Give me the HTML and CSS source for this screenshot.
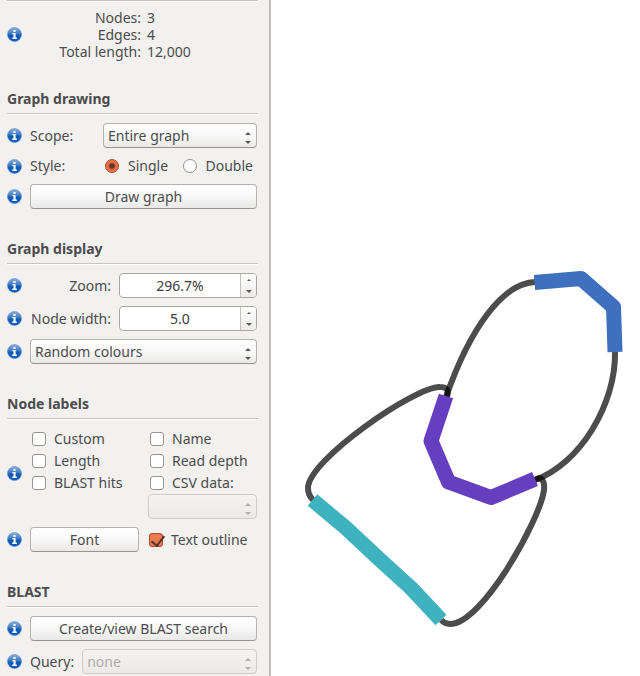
FILE: index.html
```html
<!DOCTYPE html>
<html lang="en">
<head>
<meta charset="utf-8">
<meta name="viewport" content="width=device-width, initial-scale=1">
<title>Assembly graph viewer</title>
<link rel="stylesheet" href="styles.css">
</head>
<body>
<svg class="defs" aria-hidden="true">
  <defs>
    <linearGradient id="info-fill" x1="0" y1="0" x2="0" y2="1">
      <stop offset="0" stop-color="#8fb2dc"/>
      <stop offset="0.45" stop-color="#3a79c2"/>
      <stop offset="0.55" stop-color="#0f59b0"/>
      <stop offset="1" stop-color="#0a5cc4"/>
    </linearGradient>
    <symbol id="info" viewBox="0 0 15 15">
      <circle cx="7.5" cy="7.5" r="7" fill="url(#info-fill)" stroke="#5d8cc6" stroke-width="0.6"/>
      <path d="M6.4 3h2.2v2H6.4zM5.4 6h3.2v4.6h1.2V12H5.3v-1.4h1.2V7.3H5.4z" fill="#fff"/>
    </symbol>
  </defs>
</svg>
<div class="app">
  <aside class="panel">
    <hr class="rule">
    <div class="row stats-row">
      <svg class="info"><use href="#info"/></svg>
      <dl class="stats">
        <dt>Nodes:</dt><dd>3</dd>
        <dt>Edges:</dt><dd>4</dd>
        <dt>Total length:</dt><dd>12,000</dd>
      </dl>
    </div>

    <section class="section">
      <h2 class="title">Graph drawing</h2>
      <div class="row">
        <svg class="info"><use href="#info"/></svg>
        <label class="wide-label" for="scope">Scope:</label>
        <span class="combo"><select id="scope"><option>Entire graph</option></select></span>
      </div>
      <div class="row style-row" role="radiogroup" aria-labelledby="style-label">
        <svg class="info"><use href="#info"/></svg>
        <span class="wide-label" id="style-label">Style:</span>
        <div class="radios">
          <label class="choice"><input class="radio" type="radio" name="style" checked>Single</label>
          <label class="choice"><input class="radio" type="radio" name="style">Double</label>
        </div>
      </div>
      <div class="row">
        <svg class="info"><use href="#info"/></svg>
        <button class="button" type="button">Draw graph</button>
      </div>
    </section>

    <section class="section">
      <h2 class="title">Graph display</h2>
      <div class="row">
        <svg class="info"><use href="#info"/></svg>
        <label class="spin-label" for="zoom">Zoom:</label>
        <div class="spin">
          <input id="zoom" type="text" value="296.7%">
          <div class="steps">
            <button class="step up" type="button" aria-label="Increase zoom"></button>
            <button class="step down" type="button" aria-label="Decrease zoom"></button>
          </div>
        </div>
      </div>
      <div class="row">
        <svg class="info"><use href="#info"/></svg>
        <label class="spin-label" for="width">Node width:</label>
        <div class="spin">
          <input id="width" type="text" value="5.0">
          <div class="steps">
            <button class="step up" type="button" aria-label="Increase node width"></button>
            <button class="step down" type="button" aria-label="Decrease node width"></button>
          </div>
        </div>
      </div>
      <div class="row">
        <svg class="info"><use href="#info"/></svg>
        <span class="combo"><select aria-label="Node colours"><option>Random colours</option></select></span>
      </div>
    </section>

    <section class="section">
      <h2 class="title">Node labels</h2>
      <div class="row">
        <svg class="info"><use href="#info"/></svg>
        <div class="checks">
          <label class="choice"><input class="check" type="checkbox">Custom</label>
          <label class="choice"><input class="check" type="checkbox">Name</label>
          <label class="choice"><input class="check" type="checkbox">Length</label>
          <label class="choice"><input class="check" type="checkbox">Read depth</label>
          <label class="choice"><input class="check" type="checkbox">BLAST hits</label>
          <label class="choice"><input class="check" type="checkbox">CSV data:</label>
          <span class="combo csv"><select aria-label="CSV column" disabled></select></span>
        </div>
      </div>
      <div class="row">
        <svg class="info"><use href="#info"/></svg>
        <div class="halves">
          <button class="button" type="button">Font</button>
          <label class="choice"><input class="check" type="checkbox" checked>Text outline</label>
        </div>
      </div>
    </section>

    <section class="section">
      <h2 class="title">BLAST</h2>
      <div class="row">
        <svg class="info"><use href="#info"/></svg>
        <button class="button" type="button">Create/view BLAST search</button>
      </div>
      <div class="row">
        <svg class="info"><use href="#info"/></svg>
        <label for="query">Query:</label>
        <span class="combo"><select id="query" disabled><option>none</option></select></span>
      </div>
    </section>
  </aside>

  <main class="canvas">
    <svg class="graph" viewBox="271 0 369 676" role="img" aria-label="Assembly graph">
      <g class="edges">
        <path d="M446 397C470 328 503 283 535 282"/>
        <path d="M447 397C449 390 447 387 440 387C416 386 308 460 308 488C308 493 309 496 313 500"/>
        <path d="M615 352C616 404 580 464 535 480"/>
        <path d="M535 480C541 476 545 480 544 490C540 520 482 624 450 624C446 624 443 622 441 620"/>
      </g>
      <g class="nodes">
        <path class="blue" d="M534.5 282.5L581 278.5L613.5 307L615 352"/>
        <path class="purple" d="M446 396L431 441L448.500 482L491 497.500L535 479"/>
        <path class="teal" d="M312.500 500L346 528L378 558L411 588L441 620"/>
      </g>
    </svg>
  </main>
</div>
</body>
</html>
```
FILE: styles.css
```css
* { box-sizing: border-box; }

body {
  margin: 0;
  background: #fff;
  color: #4c4c4c;
  font: 14px/20px "Noto Sans", "Open Sans", sans-serif;
}

.defs {
  position: absolute;
  width: 0;
  height: 0;
}

.app {
  display: flex;
  height: 100vh;
  overflow: hidden;
}

.panel {
  flex: 0 0 271px;
  padding: 0 11px 0 7px;
  overflow: hidden;
  background: #f2f1f0;
  border-right: 2px solid #bdbab8;
}

.rule {
  height: 1px;
  margin: 0 0 8px;
  border: 0;
  background: #c6c3c0;
  box-shadow: 0 1px #fff;
}

.row {
  display: flex;
  align-items: center;
  gap: 8px;
  min-height: 25px;
  margin-top: 8px;
  padding-right: 1px;
}

.style-row { min-height: 20px; }

.info {
  flex: none;
  width: 15px;
  height: 15px;
}

.stats-row { margin: 0; }

.stats {
  flex: 1;
  display: grid;
  grid-template-columns: 111px 1fr;
  column-gap: 6px;
  margin: 0;
  line-height: 17px;
}

.stats dt { text-align: right; }
.stats dd { margin: 0; }

.section { margin-top: 30px; }

.stats-row + .section { margin-top: 29px; }

.title {
  margin: 0 0 9px;
  padding-bottom: 4px;
  border-bottom: 1px solid #c6c3c0;
  box-shadow: 0 1px #fff;
  font-size: 14px;
  line-height: 20px;
}

.wide-label { width: 65px; }

.spin-label {
  width: 81px;
  text-align: right;
  white-space: nowrap;
}

.button,
.combo select {
  flex: 1;
  width: 100%;
  min-width: 0;
  height: 25px;
  margin: 0;
  border: 1px solid #b5b2ae;
  border-bottom-color: #98948f;
  border-radius: 4px;
  background: linear-gradient(#fff, #fafafa 45%, #e9e8e7);
  color: inherit;
  font: inherit;
  line-height: 20px;
}

.button { padding: 0; }

.combo {
  position: relative;
  flex: 1;
  display: flex;
  min-width: 0;
}

.combo select {
  appearance: none;
  padding: 0 20px 0 4px;
}

.combo select:disabled {
  border-color: #cfccc9;
  background: linear-gradient(#f4f3f2, #ebeae9);
  color: #b0adaa;
  opacity: 1;
}

.combo::before,
.combo::after {
  content: "";
  position: absolute;
  right: 6px;
  border: 3px solid transparent;
  pointer-events: none;
}

.combo::before {
  top: 9px;
  border-top: 0;
  border-bottom-color: #5c5c5c;
}

.combo::after {
  top: 18px;
  border-bottom: 0;
  border-top-color: #5c5c5c;
}

.combo:has(:disabled)::before { border-bottom-color: #b0adaa; }
.combo:has(:disabled)::after { border-top-color: #b0adaa; }

.spin {
  flex: 1;
  display: flex;
  min-width: 0;
  height: 25px;
  overflow: hidden;
  border: 1px solid #aaa7a2;
  border-radius: 4px;
  background: #fff;
}

.spin input {
  flex: 1;
  min-width: 0;
  padding: 0;
  border: 0;
  background: none;
  color: #3c3c3c;
  font: inherit;
  text-align: center;
}

.steps {
  flex: 0 0 16px;
  display: grid;
  grid-template-rows: 1fr 1fr;
  border-left: 1px solid #c4c1be;
  background: linear-gradient(#fff, #ebeae9);
}

.step {
  display: grid;
  place-items: center;
  padding: 0;
  border: 0;
  background: none;
}

.step::before {
  content: "";
  border: 3px solid transparent;
}

.step.up::before {
  border-width: 0 2px 2px;
  border-bottom-color: #5c5c5c;
}

.step.down::before {
  border-bottom: 0;
  border-top-color: #5c5c5c;
}

.radios {
  flex: 1;
  display: flex;
  justify-content: space-between;
  padding: 0 4px 0 2px;
}

.choice {
  display: flex;
  align-items: center;
  gap: 8px;
  white-space: nowrap;
}

.radios .choice { gap: 9px; }

.radio,
.check {
  appearance: none;
  flex: none;
  width: 14px;
  height: 14px;
  margin: 0;
  border: 1px solid #96928d;
  background: #fff;
}

.radio { border-radius: 50%; }

.check { border-radius: 3px; }

.radio:checked {
  border-color: #a84a2c;
  background: radial-gradient(circle, #6b3524 0 2px, #ee7146 4px);
}

.check:checked {
  position: relative;
  border-color: #a84a2c;
  background: #f07a50;
}

.check:checked::before {
  content: "";
  position: absolute;
  left: 4px;
  top: -1px;
  width: 6px;
  height: 11px;
  border: solid #56342a;
  border-width: 0 2px 2px 0;
  transform: rotate(38deg);
}

.checks,
.halves {
  flex: 1;
  display: grid;
  grid-template-columns: 1fr 1fr;
  column-gap: 9px;
}

.checks { grid-template-rows: 22px 22px 22px 25px; }

.checks .choice { padding-left: 2px; }
.halves .choice { padding-left: 1px; }

.csv { grid-column: 2; }

.canvas {
  flex: 1;
  min-width: 0;
}

.graph {
  display: block;
  width: 100%;
  height: auto;
}

.edges {
  fill: none;
  stroke: #000;
  stroke-width: 6;
}

.edges path { stroke-opacity: 0.7; }

.nodes {
  fill: none;
  stroke-width: 15;
  stroke-linejoin: round;
}

.blue { stroke: #3f6fbf; }
.purple { stroke: #653fbf; }
.teal { stroke: #3fb2bf; }
```
